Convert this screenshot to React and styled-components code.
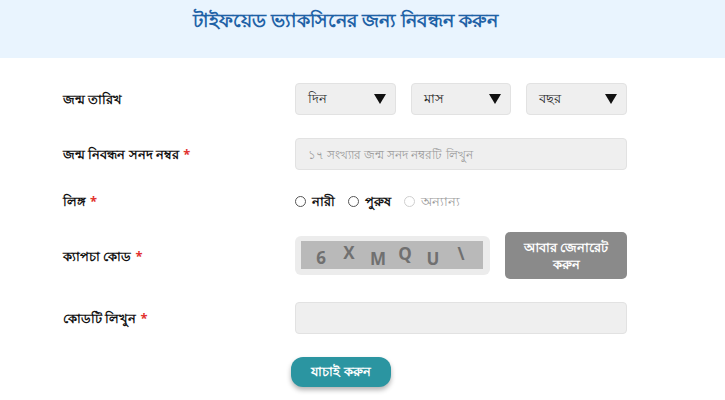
import React from 'react';
import styled, { createGlobalStyle } from 'styled-components';

const GlobalStyle = createGlobalStyle`
  html, body {
    margin: 0;
    padding: 0;
    background: #ffffff;
  }
  body {
    font-family: "Noto Sans", "Liberation Sans", sans-serif;
  }
`;

const Page = styled.div`
  width: 725px;
  min-height: 400px;
  background: #fff;
`;

const Header = styled.header`
  height: 58px;
  background: #e9f4fe;
  display: flex;
  align-items: center;
  justify-content: center;
`;

const Title = styled.h1`
  margin: 0 0 14px 0;
  font-size: 19px;
  font-weight: bold;
  color: #1f62a6;
  transform: translateX(-17px);
`;

const Form = styled.form`
  display: grid;
  grid-template-columns: 232px 332px;
  row-gap: 23px;
  padding: 25px 0 0 63px;
  align-items: center;
`;

const Label = styled.label`
  font-size: 13px;
  line-height: 16px;
  font-weight: bold;
  color: #111;
`;

const Star = styled.span`
  color: #e2332f;
  margin-left: 4px;
`;

const SelectRow = styled.div`
  display: flex;
  gap: 15px;
`;

const Select = styled.div`
  flex: 1;
  height: 32px;
  box-sizing: border-box;
  background: #efefef;
  border: 1px solid #e2e2e2;
  border-radius: 4px;
  display: flex;
  align-items: center;
  justify-content: space-between;
  padding: 0 9px 0 12px;
  font-size: 13px;
  color: #222;
`;

const Arrow = styled.span`
  width: 0;
  height: 0;
  border-left: 6px solid transparent;
  border-right: 6px solid transparent;
  border-top: 10px solid #111;
`;

const Input = styled.input`
  width: 100%;
  height: 32px;
  box-sizing: border-box;
  background: #efefef;
  border: 1px solid #e2e2e2;
  border-radius: 4px;
  padding: 0 12px;
  font-family: inherit;
  font-size: 12px;
  color: #222;
  outline: none;
  &::placeholder {
    color: #9a9a9a;
  }
`;

const RadioRow = styled.div`
  display: flex;
  align-items: center;
  gap: 13px;
  height: 16px;
`;

const RadioItem = styled.label`
  display: flex;
  align-items: center;
  gap: 6px;
  font-size: 13px;
  line-height: 16px;
  font-weight: ${p => (p.$muted ? 'normal' : 'bold')};
  color: ${p => (p.$muted ? '#9a9a9a' : '#111')};
`;

const Circle = styled.span`
  width: 9px;
  height: 9px;
  border-radius: 50%;
  border: 1px solid ${p => (p.$muted ? '#cfcfcf' : '#555')};
  background: #fff;
`;

const CaptchaRow = styled.div`
  display: flex;
  align-items: center;
  gap: 15px;
`;

const CaptchaBox = styled.div`
  width: 195px;
  height: 39px;
  box-sizing: border-box;
  background: #ececec;
  border-radius: 6px;
  padding: 5px 7px 6px 6px;
`;

const CaptchaImage = styled.div`
  height: 100%;
  background: #b9b9b9;
  display: flex;
  align-items: center;
  padding-left: 13px;
  gap: 14px;
  font-family: "Open Sans", "Liberation Sans", sans-serif;
  font-size: 17px;
  font-weight: bold;
  color: #707070;
`;

const Glyph = styled.span`
  width: 14px;
  text-align: center;
  transform: translateY(${p => p.$dy}px);
`;

const RegenButton = styled.button`
  width: 122px;
  height: 47px;
  background: #8a8a8a;
  border: none;
  border-radius: 5px;
  color: #fff;
  font-family: inherit;
  font-size: 13px;
  font-weight: bold;
  line-height: 17px;
  padding: 0 14px;
`;

const SubmitCell = styled.div`
  grid-column: 2;
`;

const SubmitButton = styled.button`
  margin-left: -4px;
  width: 100px;
  height: 30px;
  background: #2b95a1;
  border: none;
  border-radius: 12px;
  box-shadow: 0 3px 5px rgba(0, 0, 0, 0.3);
  color: #fff;
  font-family: inherit;
  font-size: 13px;
  font-weight: bold;
`;

const captcha = [
  { c: '6', dy: 2 },
  { c: 'X', dy: -3 },
  { c: 'M', dy: 3 },
  { c: 'Q', dy: -2 },
  { c: 'U', dy: 3 },
  { c: '\\', dy: -2 },
];

export default function App() {
  return (
    <Page>
      <GlobalStyle />
      <Header>
        <Title>টাইফয়েড ভ্যাকসিনের জন্য নিবন্ধন করুন</Title>
      </Header>
      <Form onSubmit={e => e.preventDefault()}>
        <Label>জন্ম তারিখ</Label>
        <SelectRow>
          <Select>দিন<Arrow /></Select>
          <Select>মাস<Arrow /></Select>
          <Select>বছর<Arrow /></Select>
        </SelectRow>

        <Label>জন্ম নিবন্ধন সনদ নম্বর<Star>*</Star></Label>
        <Input placeholder="১৭ সংখ্যার জন্ম সনদ নম্বরটি লিখুন" />

        <Label>লিঙ্গ<Star>*</Star></Label>
        <RadioRow>
          <RadioItem><Circle />নারী</RadioItem>
          <RadioItem><Circle />পুরুষ</RadioItem>
          <RadioItem $muted><Circle $muted />অন্যান্য</RadioItem>
        </RadioRow>

        <Label>ক্যাপচা কোড<Star>*</Star></Label>
        <CaptchaRow>
          <CaptchaBox>
            <CaptchaImage>
              {captcha.map((g, i) => (
                <Glyph key={i} $dy={g.dy}>{g.c}</Glyph>
              ))}
            </CaptchaImage>
          </CaptchaBox>
          <RegenButton type="button">আবার জেনারেট করুন</RegenButton>
        </CaptchaRow>

        <Label>কোডটি লিখুন<Star>*</Star></Label>
        <Input />

        <SubmitCell>
          <SubmitButton type="submit">যাচাই করুন</SubmitButton>
        </SubmitCell>
      </Form>
    </Page>
  );
}
